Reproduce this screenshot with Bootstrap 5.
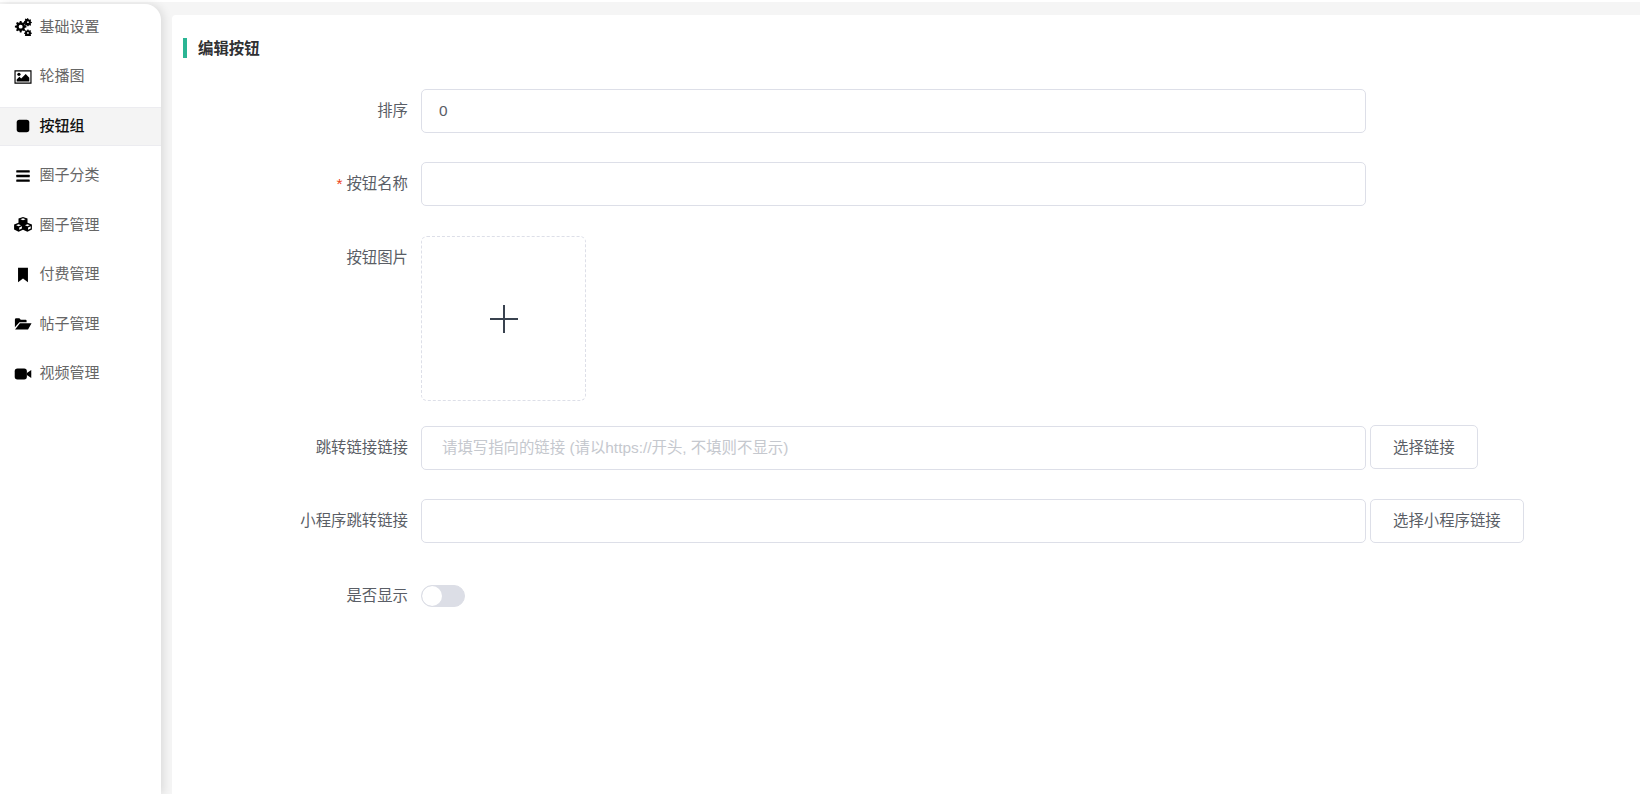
<!DOCTYPE html>
<html lang="zh-CN">
<head>
<meta charset="utf-8">
<title>编辑按钮</title>
<link rel="stylesheet" href="https://cdn.jsdelivr.net/npm/bootstrap@5.3.0/dist/css/bootstrap.min.css">
<style>
html,body{height:100%;margin:0;background:#fff;overflow:hidden;}
body{padding-top:2px;font-family:"Liberation Sans","Noto Sans CJK SC",sans-serif;font-size:15.4px;color:#5a5e66;}
.shell{height:100%;background:#f5f5f5;}
.side{width:161px;margin-top:2px;background:#fff;border-top-right-radius:16px;box-shadow:3px 0 8px rgba(0,0,0,.1);padding-top:3.5px;position:relative;z-index:1;flex:none;}
.side-item{height:39px;margin-bottom:10.5px;padding-left:14px;gap:7.5px;color:#666;font-size:15px;border-top:1px solid transparent;border-bottom:1px solid transparent;}
.side-item svg{width:18px;height:18px;flex:none;fill:#000;}
.side-on{background:#f4f4f4;border-color:#ececf0;color:#111;font-weight:500;}
.panel{margin:13px 0 0 11px;background:#fff;border-radius:4px 0 0 0;min-width:0;}
.heading{height:20px;margin:23px 0 0 11px;padding-left:11px;border-left:4px solid #2bb594;color:#303133;font-size:15.4px;font-weight:700;line-height:22px;}
.form-stack{margin-top:31px;}
.line{margin-bottom:29px;}
.line-wide{margin-bottom:30px;}
.line-upload{margin-bottom:25px;}
.line-last{margin-bottom:42px;}
.line-tag{width:249px;padding-right:13px;text-align:right;flex:none;line-height:44px;height:44px;white-space:nowrap;}
.tag-short{line-height:21px;height:22px;}
.star{color:#ed4014;font-size:15.4px;margin-right:4px;}
.line-tag,.entry,.pick{font-size:15.4px;}
.entry{width:945px;height:44px;flex:none;border:1px solid #dddfe8;border-radius:5px;padding:0 17px;color:#5a5e66;box-shadow:none;}
.entry::placeholder{color:#c5c8ce;opacity:1;}
.entry-indent{padding-left:20px;}
.pick{height:44px;margin-left:4px;padding:0 22px;border:1px solid #dddfe8;border-radius:5px;background:#fff;color:#5a5e66;white-space:nowrap;}
.lift{margin-top:-1px;align-self:flex-start;padding-top:2px;}
.uploader{width:165px;height:165px;border:1px dashed #dddfe8;border-radius:6px;}
.uploader svg{width:30px;height:30px;}
.toggle-wrap{min-height:0;padding-left:0;margin:0;}
.form-switch .toggle{width:44px;height:22px;margin:0;float:none;display:block;background-color:#dcdee6;border:1px solid #dcdee6;background-image:url("data:image/svg+xml,%3csvg xmlns='http://www.w3.org/2000/svg' viewBox='-4 -4 8 8'%3e%3ccircle r='4' fill='%23fff'/%3e%3c/svg%3e");background-position:left center;box-shadow:none;}
</style>
</head>
<body>
<div class="shell d-flex">
  <aside class="side">
    <div class="side-item d-flex align-items-center"><svg viewBox="0 0 20 20"><path fill-rule="evenodd" d="M6.500 3.200h1.800l.4 1.700 1.100.5 1.500-.9 1.200 1.200-.9 1.500.5 1.100 1.700.4v1.800l-1.700.4-.5 1.100.9 1.500-1.200 1.200-1.500-.9-1.100.5-.4 1.700H6.500l-.4-1.700-1.100-.5-1.500.9-1.200-1.200.9-1.500-.5-1.100-1.700-.4V8.700l1.700-.4.5-1.100-.9-1.500 1.200-1.200 1.500.9 1.100-.5zM7.400 7.400a2.200 2.200 0 1 0 0 4.400 2.200 2.200 0 0 0 0-4.400z"/><path fill-rule="evenodd" d="M16 .8l.4 1 .9.200.9-.5.8.8-.5.9.3.9 1 .3v1.200l-1 .3-.3.9.5.9-.8.8-.9-.5-.9.300-.4 1h-1.100l-.3-1-.9-.3-.9.5-.8-.8.5-.9-.3-.9-1-.3V3.400l1-.3.3-.9-.5-.9.8-.7.900.5.900-.3.300-1zm-.5 2.800a1 1 0 1 0 0 2 1 1 0 0 0 0-2zM16 12.800l.4 1 .9.200.9-.5.8.8-.5.9.3.9 1 .3v1.200l-1 .3-.3.9.5.9-.8.8-.9-.5-.9.300-.4 1h-1.100l-.3-1-.9-.3-.9.5-.8-.8.5-.9-.3-.9-1-.3v-1.200l1-.3.3-.9-.5-.9.8-.7.900.5.900-.3.300-1zm-.5 2.800a1 1 0 1 0 0 2 1 1 0 0 0 0-2z"/></svg><span>基础设置</span></div>
    <div class="side-item d-flex align-items-center"><svg viewBox="0 0 20 20"><path fill-rule="evenodd" d="M.5 2.500h19v15H.5zM1.800 3.800v12.400h16.400V3.800z"/><circle cx="5.500" cy="7" r="1.800"/><path d="M3 15v-2.200l3-3 2 2 5-5 4 4V15z"/></svg><span>轮播图</span></div>
    <div class="side-item side-on d-flex align-items-center"><svg viewBox="0 0 20 20"><rect x="3" y="3" width="14" height="14" rx="3"/></svg><span>按钮组</span></div>
    <div class="side-item d-flex align-items-center"><svg viewBox="0 0 20 20"><rect x="2.500" y="3.500" width="15" height="2.600" rx=".6"/><rect x="2.500" y="8.700" width="15" height="2.600" rx=".6"/><rect x="2.500" y="13.900" width="15" height="2.600" rx=".6"/></svg><span>圈子分类</span></div>
    <div class="side-item d-flex align-items-center"><svg viewBox="0 0 20 20"><path d="M10 1l5 1.900v4.700l4.900 1.900v5.600L14.900 17.500 10 15.400l-4.900 2.100L.1 15.100V9.500L5 7.600V2.900z"/><path fill="#fff" d="M10 2.600l2.900 1.100-2.900 1.100-2.900-1.100zM5.100 9.300l2.700 1-2.700 1.100-2.700-1.100zM14.900 9.300l2.700 1-2.700 1.100-2.700-1.100zM5.800 12.700l3-1.200v2.500l-3 1.400zM15.600 12.700l3-1.200v2.500l-3 1.400z"/></svg><span>圈子管理</span></div>
    <div class="side-item d-flex align-items-center"><svg viewBox="0 0 20 20"><path d="M4.500 2h11v16L10 13.800 4.500 18z"/></svg><span>付费管理</span></div>
    <div class="side-item d-flex align-items-center"><svg viewBox="0 0 20 20"><path d="M1 5a1.500 1.500 0 0 1 1.500-1.500h3.500l1.500 1.800h5.500a1 1 0 0 1 1 1V8H6L1 13.500zM6.600 9.200H19.500l-3.900 7H1.200z"/></svg><span>帖子管理</span></div>
    <div class="side-item d-flex align-items-center"><svg viewBox="0 0 20 20"><rect x=".8" y="4" width="13.500" height="12" rx="3"/><path d="M14.300 8.800l4.900-3.300v9l-4.900-3.300z"/></svg><span>视频管理</span></div>
  </aside>
  <main class="panel flex-grow-1">
    <div class="heading">编辑按钮</div>
    <form class="form-stack">
      <div class="line d-flex">
        <label class="line-tag">排序</label>
        <input class="form-control entry" type="text" value="0">
      </div>
      <div class="line line-wide d-flex">
        <label class="line-tag"><span class="star">*</span>按钮名称</label>
        <input class="form-control entry" type="text">
      </div>
      <div class="line line-upload d-flex">
        <label class="line-tag">按钮图片</label>
        <div class="uploader d-flex align-items-center justify-content-center">
          <svg viewBox="0 0 30 30"><rect x="1" y="14" width="28" height="2" fill="#39424f"/><rect x="14" y="1" width="2" height="28" fill="#39424f"/></svg>
        </div>
      </div>
      <div class="line d-flex">
        <label class="line-tag">跳转链接链接</label>
        <input class="form-control entry entry-indent" type="text" placeholder="请填写指向的链接 (请以https://开头, 不填则不显示)">
        <button type="button" class="btn pick lift">选择链接</button>
      </div>
      <div class="line line-last d-flex">
        <label class="line-tag">小程序跳转链接</label>
        <input class="form-control entry" type="text">
        <button type="button" class="btn pick">选择小程序链接</button>
      </div>
      <div class="line d-flex align-items-center">
        <label class="line-tag tag-short">是否显示</label>
        <div class="form-check form-switch toggle-wrap"><input class="form-check-input toggle" type="checkbox" role="switch" aria-label="是否显示"></div>
      </div>
    </form>
  </main>
</div>
<script src="https://cdn.jsdelivr.net/npm/bootstrap@5.3.0/dist/js/bootstrap.bundle.min.js"></script>
</body>
</html>
